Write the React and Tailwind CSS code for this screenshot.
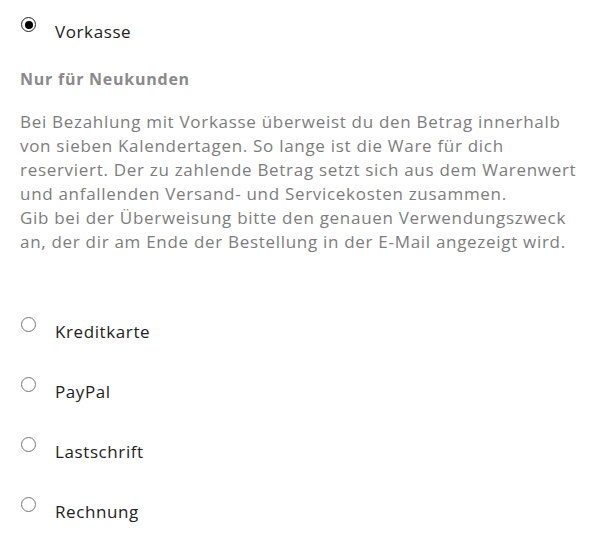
import React from 'react';

const Radio = ({ checked }) => (
  <span
    className={
      'flex h-[15px] w-[15px] shrink-0 items-center justify-center rounded-full border bg-white ' +
      (checked ? 'border-[#222]' : 'border-[#767676]')
    }
  >
    {checked && <span className="h-[8px] w-[8px] rounded-full bg-black" />}
  </span>
);

const Option = ({ label, checked }) => (
  <div className="flex items-start">
    <Radio checked={checked} />
    <span className="ml-[19px] mt-[3px] text-[17px] leading-6 tracking-[0.6px] text-[#222]">{label}</span>
  </div>
);

const lines = [
  'Bei Bezahlung mit Vorkasse überweist du den Betrag innerhalb',
  'von sieben Kalendertagen. So lange ist die Ware für dich',
  'reserviert. Der zu zahlende Betrag setzt sich aus dem Warenwert',
  'und anfallenden Versand- und Servicekosten zusammen.',
  'Gib bei der Überweisung bitte den genauen Verwendungszweck',
  'an, der dir am Ende der Bestellung in der E-Mail angezeigt wird.',
];

const App = () => {
  return (
    <div
      className="min-h-screen bg-white pl-[21px] pt-[17px]"
      style={{ fontFamily: '"Open Sans", "DejaVu Sans", sans-serif' }}
    >
      <Option label="Vorkasse" checked />
      <div className="ml-[-1px]">
        <h3 className="mt-[23px] text-[16px] font-bold leading-6 tracking-[0.75px] text-[#8a8a8a]">
          Nur für Neukunden
        </h3>
        <p className="mt-[19px] text-[17px] leading-6 tracking-[0.7px] text-[#7d7d7d]">
          {lines.map((l) => (
            <span key={l} className="block whitespace-nowrap">
              {l}
            </span>
          ))}
        </p>
      </div>
      <div className="mt-[63px] flex flex-col gap-[33px]">
        <Option label="Kreditkarte" />
        <Option label="PayPal" />
        <Option label="Lastschrift" />
        <Option label="Rechnung" />
      </div>
    </div>
  );
};

export default App;
